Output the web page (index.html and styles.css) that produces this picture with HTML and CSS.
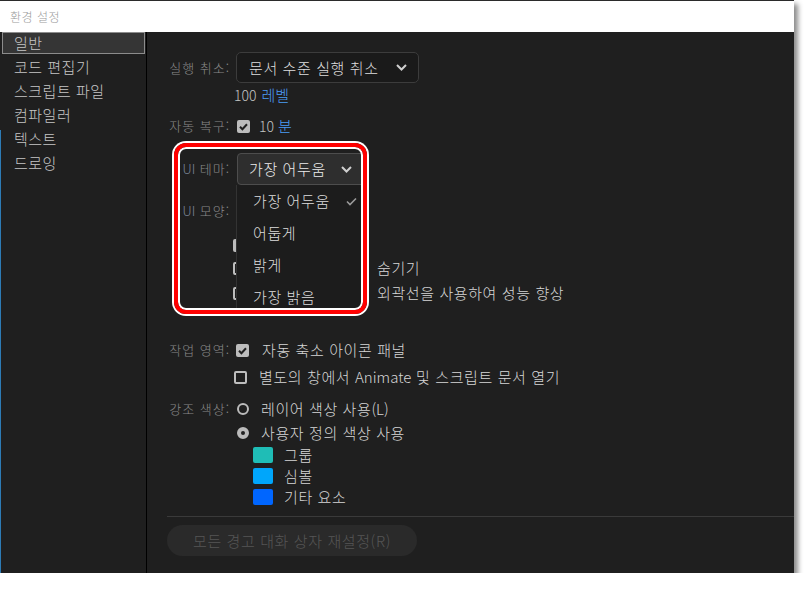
FILE: index.html
```html
<!DOCTYPE html>
<html lang="ko">
<head>
    <meta charset="UTF-8">
    <meta name="viewport" content="width=device-width, initial-scale=1.0">
    <title>환경 설정</title>
    <link rel="stylesheet" href="styles.css">
</head>
<body>
    <div class="window">
        <div class="titlebar">환경 설정</div>
        <div class="frame">
            <nav class="sidebar">
                <div class="nav-item active">일반</div>
                <div class="nav-item">코드 편집기</div>
                <div class="nav-item">스크립트 파일</div>
                <div class="nav-item">컴파일러</div>
                <div class="nav-item">텍스트</div>
                <div class="nav-item">드로잉</div>
            </nav>

            <main class="content">
                <div class="row row-undo">
                    <span class="label">실행 취소:</span>
                    <div class="select select-undo">
                        <span>문서 수준 실행 취소</span>
                        <svg width="11" height="7" viewBox="0 0 11 7"><path d="M1 1 L5.5 5.5 L10 1" fill="none" stroke="#cfcfcf" stroke-width="2"/></svg>
                    </div>
                </div>
                <div class="row row-levels">
                    <span class="num">100</span><span class="link">레벨</span>
                </div>
                <div class="row row-autosave">
                    <span class="label">자동 복구:</span>
                    <span class="check on"><svg width="13" height="13" viewBox="0 0 13 13"><path d="M3 6.8 L5.4 9.2 L10 4.2" fill="none" stroke="#1f1f1f" stroke-width="2"/></svg></span>
                    <span class="num">10</span><span class="link">분</span>
                </div>

                <div class="row row-theme">
                    <span class="label"><span class="ui">UI</span> 테마:</span>
                    <div class="dropdown">
                        <div class="select select-theme">
                            <span>가장 어두움</span>
                            <svg width="11" height="7" viewBox="0 0 11 7"><path d="M1 1 L5.5 5.5 L10 1" fill="none" stroke="#cfcfcf" stroke-width="2"/></svg>
                        </div>
                        <ul class="menu">
                            <li>가장 어두움 <svg width="11" height="9" viewBox="0 0 11 9"><path d="M1 4.5 L4 7.5 L10 1.5" fill="none" stroke="#9a9a9a" stroke-width="1.6"/></svg></li>
                            <li>어둡게</li>
                            <li>밝게</li>
                            <li>가장 밝음</li>
                        </ul>
                    </div>
                </div>
                <div class="row row-look">
                    <span class="label"><span class="ui">UI</span> 모양:</span>
                    <div class="select select-theme"></div>
                </div>
                <div class="row row-hidden first">
                    <span class="check on"></span>
                </div>
                <div class="row row-hidden second">
                    <span class="check"></span>
                    <span class="text tail">숨기기</span>
                </div>
                <div class="row row-hidden third">
                    <span class="check"></span>
                    <span class="text tail">외곽선을 사용하여 성능 향상</span>
                </div>

                <div class="row row-workspace">
                    <span class="label">작업 영역:</span>
                    <span class="check on"><svg width="13" height="13" viewBox="0 0 13 13"><path d="M3 6.8 L5.4 9.2 L10 4.2" fill="none" stroke="#1f1f1f" stroke-width="2"/></svg></span>
                    <span class="text">자동 축소 아이콘 패널</span>
                </div>
                <div class="row row-animate">
                    <span class="check"></span>
                    <span class="text">별도의 창에서 <span class="latin">Animate</span> 및 스크립트 문서 열기</span>
                </div>

                <div class="row row-accent">
                    <span class="label">강조 색상:</span>
                    <span class="radio"></span>
                    <span class="text">레이어 색상 사용<span class="latin">(L)</span></span>
                </div>
                <div class="row row-custom">
                    <span class="radio on"></span>
                    <span class="text">사용자 정의 색상 사용</span>
                </div>
                <div class="row row-swatch">
                    <span class="swatch" style="background:#1fbdb6"></span>
                    <span class="text">그룹</span>
                </div>
                <div class="row row-swatch">
                    <span class="swatch" style="background:#00a6fb"></span>
                    <span class="text">심볼</span>
                </div>
                <div class="row row-swatch">
                    <span class="swatch" style="background:#0066ff"></span>
                    <span class="text">기타 요소</span>
                </div>

                <div class="divider"></div>
                <button class="reset">모든 경고 대화 상자 재설정(R)</button>

                <div class="callout"></div>
            </main>
        </div>
    </div>
</body>
</html>
```

FILE: styles.css
```css
* {
  margin: 0;
  padding: 0;
  box-sizing: border-box;
}
body {
  background: #fff;
  font-family: "Noto Sans CJK KR", "Noto Sans", sans-serif;
  font-weight: 300;
}
.window {
  width: 794px;
  height: 573px;
  display: flex;
  flex-direction: column;
  border-top: 1px solid #2b2b2b;
  box-shadow: 4px 4px 5px rgba(0, 0, 0, 0.45);
}
.titlebar {
  height: 31px;
  line-height: 31px;
  padding-left: 10px;
  background: #fff;
  color: #9a9a9a;
  font-size: 12px;
  letter-spacing: 0.5px;
}
.frame {
  flex: 1;
  display: flex;
  background: #1f1f1f;
}

/* left list */
.sidebar {
  width: 147px;
  border-right: 1px solid #000;
  padding: 0 1px 0 2px;
  position: relative;
}
.sidebar::before {
  content: "";
  position: absolute;
  left: 0;
  top: 98px;
  bottom: 0;
  width: 1px;
  background: #2d7bb5;
}
.nav-item {
  height: 22px;
  line-height: 20px;
  margin-bottom: 2px;
  padding-left: 11px;
  border: 1px solid transparent;
  color: #c6c6c6;
  font-size: 15px;
  letter-spacing: 0.5px;
}
.nav-item.active {
  background: #353535;
  border-color: #8c8c8c;
}

/* right panel */
.content {
  flex: 1;
  position: relative;
  padding: 20px 0 0 21px;
}
.row {
  display: flex;
  align-items: center;
  height: 20px;
  line-height: 20px;
}
.label {
  width: 62px;
  margin-right: 6px;
  flex-shrink: 0;
  text-align: right;
  color: #8a8a8a;
  font-size: 13px;
  letter-spacing: 1px;
  white-space: nowrap;
}
.ui {
  color: #7d8799;
  letter-spacing: 0;
}
.text {
  color: #d6d6d6;
  font-size: 15px;
  letter-spacing: 0.6px;
  white-space: nowrap;
}
.latin {
  letter-spacing: 0;
}
.tail {
  margin-left: 119px;
}
.num {
  color: #c4c4c4;
  font-size: 14px;
}
.link {
  color: #4b9cf5;
  font-size: 15px;
  margin-left: 5px;
}

.select {
  display: flex;
  align-items: center;
  justify-content: space-between;
  border-radius: 5px;
  color: #dedede;
  font-size: 15px;
  letter-spacing: 0.6px;
}
.select-undo {
  width: 183px;
  height: 31px;
  padding: 0 11px 0 12px;
  background: #1a1a1a;
  border: 1px solid #3c3c3c;
}
.select-theme {
  width: 128px;
  height: 32px;
  padding: 0 12px 0 11px;
  margin-left: 1px;
  background: #2e2e2e;
  border: 1px solid #4d4d4d;
  border-radius: 4px;
  color: #ececec;
}

.dropdown {
  position: relative;
}
.menu {
  position: absolute;
  top: 32px;
  left: 0;
  width: 129px;
  height: 127px;
  list-style: none;
  background: #1c1c1c;
  border-left: 1px solid #333;
  z-index: 1;
}
.menu li {
  height: 32px;
  display: flex;
  align-items: center;
  justify-content: space-between;
  padding: 0 8px 0 16px;
  color: #dcdcdc;
  font-size: 15px;
  letter-spacing: 0.6px;
}

.check {
  width: 13px;
  height: 13px;
  flex-shrink: 0;
  border: 2px solid #bdbdbd;
  border-radius: 2px;
  margin-right: 12px;
}
.check.on {
  border: none;
  background: #bcbcbc;
}
.check svg {
  display: block;
}
.radio {
  width: 12px;
  height: 12px;
  flex-shrink: 0;
  border: 2px solid #bbb;
  border-radius: 50%;
  margin: 0 12px 0 1px;
  position: relative;
}
.radio.on {
  background: #bbb;
}
.radio.on::after {
  content: "";
  position: absolute;
  left: 2px;
  top: 2px;
  width: 4px;
  height: 4px;
  border-radius: 50%;
  background: #222;
}
.swatch {
  width: 20px;
  height: 16px;
  border-radius: 2px;
  margin-right: 11px;
}

/* vertical rhythm */
.row-undo { height: 31px; }
.row-levels { height: 16px; margin-top: 4px; padding-left: 66px; }
.row-autosave { height: 18px; margin-top: 14px; }
.row-autosave .check { margin: 0 9px 0 1px; }
.row-autosave .link { margin-left: 4px; }
.row-theme { height: 32px; margin-top: 18px; }
.row-look { height: 30px; margin-top: 11px; }
.row-hidden { padding-left: 65px; }
.row-hidden.first { margin-top: 9px; }
.row-hidden.second { margin-top: 3px; }
.row-hidden.third { margin-top: 5px; }
.row-workspace { margin-top: 37px; }
.row-workspace .check { margin-right: 13px; }
.row-animate { margin-top: 7px; padding-left: 66px; }
.row-accent { margin-top: 12px; }
.row-custom { margin-top: 4px; padding-left: 68px; }
.row-swatch { height: 16px; margin-top: 5px; padding-left: 85px; }
.row-custom + .row-swatch { margin-top: 4px; }

.divider {
  height: 1px;
  margin: 11px 0 0 -1px;
  background: #3a3a3a;
}
.reset {
  display: block;
  width: 250px;
  height: 31px;
  margin: 8px 0 0 -1px;
  border: none;
  border-radius: 16px;
  background: #2a2a2a;
  color: #565656;
  font-family: inherit;
  font-weight: 300;
  font-size: 15px;
  letter-spacing: 0.6px;
}

/* red annotation drawn over the theme controls */
.callout {
  position: absolute;
  left: 27px;
  top: 111px;
  width: 193px;
  height: 171px;
  border: 4px solid #f00;
  border-radius: 12px;
  box-shadow: 0 0 0 2px #fff, inset 0 0 0 2px #fff;
  pointer-events: none;
  z-index: 2;
}
```
